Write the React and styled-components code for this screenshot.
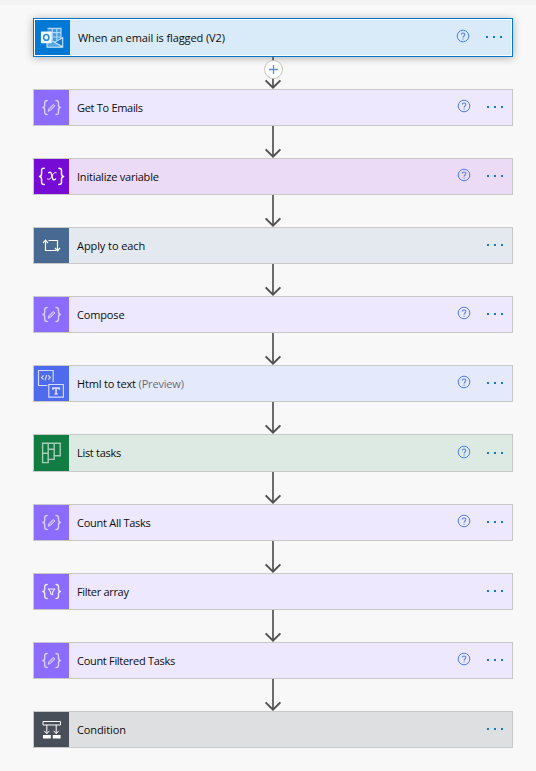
import React from "react";
import styled, { createGlobalStyle, css } from "styled-components";

const GlobalStyle = createGlobalStyle`
  * { box-sizing: border-box; }
  body { margin: 0; background: #f8f8f8; overflow: hidden; }
`;

const Page = styled.div`
  width: 536px;
  height: 771px;
  background: #f8f8f8;
  font-family: "Open Sans", "Noto Sans", sans-serif;
`;

const TopStrip = styled.div`
  height: 5px;
  background: #f3f3f3;
`;

const Flow = styled.main`
  display: flex;
  flex-direction: column;
  width: 480px;
  margin: 13px 0 0 33px;
`;

const Card = styled.section`
  display: flex;
  align-items: stretch;
  height: ${(p) => p.$height || 37}px;
  flex: none;
  border: 1px solid #c8c8c8;
  background: ${(p) => p.$tint};
  ${(p) =>
    p.$selected &&
    css`
      border-color: #0078d4;
      padding: 1px;
      background: linear-gradient(${p.$tint}, ${p.$tint}) content-box, #fff;
      box-shadow: 0 1px 8px rgba(0, 0, 0, 0.3);
    `}
`;

const IconTile = styled.div`
  width: 35px;
  flex: none;
  background: ${(p) => p.$color};
  svg { display: block; width: 35px; height: 35px; }
`;

const Title = styled.div`
  flex: 1;
  padding-left: 8px;
  line-height: 35px;
  font-size: 11px;
  letter-spacing: ${(p) => p.$tracking || 0}px;
  color: #0c0c0c;
  white-space: nowrap;
`;

const Note = styled.span`
  color: #6c6c74;
`;

const Actions = styled.div`
  display: flex;
  align-items: flex-start;
  width: 55px;
  flex: none;
  padding-top: ${(p) => (p.$tall ? 10 : 9)}px;
`;

const HelpSlot = styled.div`
  width: 30px;
  svg { display: block; }
`;

const MoreButton = styled.button`
  width: 25px;
  padding: 6px 0 0;
  border: 0;
  background: none;
  svg { display: block; }
`;

const Connector = styled.div`
  height: 32px;
  flex: none;
  position: relative;
  svg { display: block; margin-left: 231px; }
`;

const AddStep = styled.button`
  position: absolute;
  left: 231px;
  top: 3px;
  width: 19px;
  height: 19px;
  padding: 0;
  border: 1px solid #c4c4c4;
  border-radius: 50%;
  background: #fff;
  svg { display: block; margin: 0; }
`;

const stroke = { fill: "none", stroke: "#fff", strokeLinecap: "round", strokeLinejoin: "round" };

const Braces = ({ width = 1.2 }) => (
  <g {...stroke} strokeWidth={width}>
    <path d="M13.2 10.5c-2.2 0-2.5.7-2.5 2.2v2.4c0 1.5-.6 2.3-1.9 2.4 1.3.1 1.9.9 1.9 2.4v2.4c0 1.5.3 2.2 2.5 2.2" />
    <path d="M22 10.5c2.2 0 2.5.7 2.5 2.2v2.4c0 1.5.6 2.3 1.9 2.4-1.3.1-1.9.9-1.9 2.4v2.4c0 1.5-.3 2.2-2.5 2.2" />
  </g>
);

const ICONS = {
  compose: (
    <g opacity="0.68">
      <Braces width={1.4} />
      <path {...stroke} strokeWidth="1" fill="#fff" fillOpacity=".5" d="M14.3 20.9l.7-2.3 4.3-4.3 1.6 1.6-4.3 4.3z" />
    </g>
  ),
  filter: (
    <g opacity="0.85">
      <Braces width={1.4} />
      <path {...stroke} strokeWidth="1.1" d="M14.3 15h6.6l-2.3 2.8v3l-2-1v-2z" />
    </g>
  ),
  variable: (
    <g {...stroke} strokeWidth="1.5">
      <path d="M10.2 9.2c-2.2 0-2.6.7-2.6 2.3v3c0 1.8-.7 2.7-2.1 2.9 1.4.2 2.1 1.1 2.1 2.9v3c0 1.6.4 2.3 2.6 2.3" />
      <path d="M24.9 9.2c2.2 0 2.6.7 2.6 2.3v3c0 1.8.7 2.7 2.1 2.9-1.4.2-2.1 1.1-2.1 2.9v3c0 1.6-.4 2.3-2.6 2.3" />
      <path strokeWidth="1.4" d="M14.8 13.7c1.5-.9 2.3-.4 2.7 1.3l1.1 4.5c.4 1.7 1.5 1.9 2.9.5" />
      <path strokeWidth="1" d="M22.2 13.7c-1.4-.6-2.5.3-3.7 2.4l-1.4 2.4c-1 1.7-2 2.2-3.6 1.5" />
    </g>
  ),
  loop: (
    <g fill="none" stroke="#fff" strokeWidth="1.2">
      <path d="M11.5 12.5V22.5H22" />
      <path d="M9 15l2.5-2.8L14 15" />
      <path d="M14.5 12.5H23.5V22.5" />
      <path d="M21 20l2.5 2.8L26 20" />
    </g>
  ),
  html: (
    <g fill="none" stroke="#fff" strokeWidth="1.2" opacity=".75">
      <path d="M13.5 19.5H4.5V4.5H19.2V16" />
      <path d="M9.5 9.3L7.5 11.5l2 2.2M14.3 9.3l2 2.2-2 2.2M12.7 9l-1.6 5.2" />
      <path d="M14.8 18.5H29.4V31.2H14.8z" />
      <path strokeWidth="1.7" d="M18.9 23.8v-1.6h6.4v1.6M22.1 22v6.3M20.4 28h3.4" />
    </g>
  ),
  planner: (
    <g fill="none" stroke="#fff" strokeWidth="1.4" opacity=".62">
      <path d="M8.6 8.2H26.2V20.8H20.2V24.4H14.2V27.6H8.6z" />
      <path d="M14.2 8.2V24.4M20.2 8.2V20.8M8.6 18.2h5.6M14.2 14.3h6" />
    </g>
  ),
  condition: (
    <g fill="none" stroke="#fff">
      <path d="M9 9.5H26.5V13H9z" />
      <path d="M12.8 13v8.5M22.2 13v8.5" />
      <path d="M10.2 18.8l2.6 2.9 2.6-2.9M19.6 18.8l2.6 2.9 2.6-2.9" />
      <path fill="#fff" stroke="none" d="M9 23h7.8v3.6H9zM18.8 23h7.8v3.6h-7.8z" />
    </g>
  ),
  outlook: (
    <g>
      <path fill="#3f9be3" d="M12.5 8H26v14H12.5z" />
      <g fill="none" stroke="#b3d8f6" strokeWidth="1.2">
        <path d="M12.5 8.3H26V27" />
        <path d="M17.3 8.3v12M21.8 8.3v12M12.5 12.7H26M12.5 17H26" />
      </g>
      <path fill="#56a8e8" d="M12 19l8 3.5 7.6-5v10H12z" />
      <path fill="#0f7fd8" d="M20 22.6l7-4v7z" />
      <path fill="none" stroke="#cde6fa" strokeWidth="1.1" d="M12 23v4.3h15.7V17.6L19.5 22.4M17 20.8l10.5 6.2" />
      <path fill="#f5faff" d="M6.5 11.4h9.6a.6.6 0 0 1 .6.6v10.6a.6.6 0 0 1-.6.6H6.5a.6.6 0 0 1-.6-.6V12a.6.6 0 0 1 .6-.6z" />
      <ellipse cx="11.3" cy="17.4" rx="2.6" ry="2.9" fill="none" stroke="#2b8fde" strokeWidth="1.6" />
    </g>
  ),
};

const HelpIcon = () => (
  <svg width="14" height="14" viewBox="0 0 14 14" fill="none" stroke="#4d7df5">
    <circle cx="7" cy="7" r="5.8" strokeWidth="1" />
    <path strokeWidth="1.1" d="M5.3 5.6c0-2.2 3.5-2.2 3.5-.1 0 1.3-1.7 1.4-1.7 3M7.1 9.5v1.1" />
  </svg>
);

const MoreIcon = () => (
  <svg width="18" height="4" viewBox="0 0 18 4" fill="#0f7ad6">
    <path d="M0 1h2v2H0zM7 1h2v2H7zM14 1h2v2h-2z" />
  </svg>
);

const ArrowIcon = () => (
  <svg width="18" height="32" viewBox="0 0 18 32" fill="none">
    <path stroke="#6b6b6b" strokeWidth="2" d="M9 0v31" />
    <path stroke="#505050" strokeWidth="2" d="M1.6 23.4L9 30.6l7.4-7.2" />
  </svg>
);

const PlusIcon = () => (
  <svg width="17" height="17" viewBox="0 0 17 17" stroke="#5a8fd6" strokeWidth="1.3">
    <path d="M8.5 4v9M4 8.5h9" />
  </svg>
);

const STEPS = [
  { title: "When an email is flagged (V2)", tracking: -0.1, icon: "outlook", color: "#0078d4", tint: "#d9eaf8", help: true, selected: true, height: 39 },
  { title: "Get To Emails", tracking: -0.3, icon: "compose", color: "#8c6cff", tint: "#eee8ff", help: true },
  { title: "Initialize variable", tracking: -0.22, icon: "variable", color: "#770bd6", tint: "#ebdbf7", help: true },
  { title: "Apply to each", tracking: -0.08, icon: "loop", color: "#486991", tint: "#e4e9ef" },
  { title: "Compose", tracking: -0.15, icon: "compose", color: "#8c6cff", tint: "#eee8ff", help: true },
  { title: "Html to text", note: "(Preview)", tracking: -0.18, icon: "html", color: "#4f6bed", tint: "#e4e9fc", help: true },
  { title: "List tasks", tracking: -0.3, icon: "planner", color: "#127d42", tint: "#dceae3", help: true, height: 38 },
  { title: "Count All Tasks", tracking: -0.27, icon: "compose", color: "#8c6cff", tint: "#eee8ff", help: true },
  { title: "Filter array", tracking: -0.32, icon: "filter", color: "#8c6cff", tint: "#eee8ff" },
  { title: "Count Filtered Tasks", tracking: -0.3, icon: "compose", color: "#8c6cff", tint: "#eee8ff", help: true },
  { title: "Condition", tracking: -0.1, icon: "condition", color: "#484f58", tint: "#dedfe1" },
];

export default function App() {
  return (
    <Page>
      <GlobalStyle />
      <TopStrip />
      <Flow>
        {STEPS.map((s, i) => (
          <React.Fragment key={s.title}>
            {i > 0 && (
              <Connector>
                <ArrowIcon />
                {i === 1 && (
                  <AddStep aria-label="Insert step">
                    <PlusIcon />
                  </AddStep>
                )}
              </Connector>
            )}
            <Card $tint={s.tint} $selected={s.selected} $height={s.height}>
              <IconTile $color={s.color}>
                <svg viewBox="0 0 35 35">{ICONS[s.icon]}</svg>
              </IconTile>
              <Title $tracking={s.tracking}>
                {s.title}
                {s.note && <Note> {s.note}</Note>}
              </Title>
              <Actions $tall={s.height === 38}>
                <HelpSlot>{s.help && <HelpIcon />}</HelpSlot>
                <MoreButton aria-label="More commands">
                  <MoreIcon />
                </MoreButton>
              </Actions>
            </Card>
          </React.Fragment>
        ))}
      </Flow>
    </Page>
  );
}
